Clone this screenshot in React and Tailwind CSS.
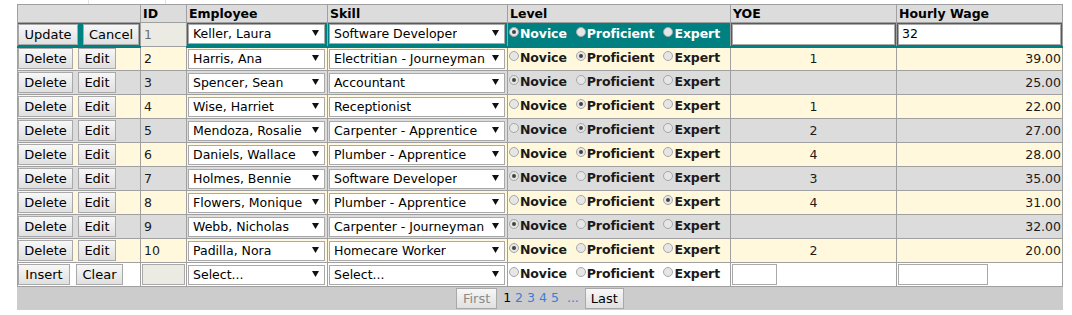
import { useState } from "react";

const rows = [
  { id: 1, emp: "Keller, Laura", skill: "Software Developer", level: 0, yoe: "", wage: "32" },
  { id: 2, emp: "Harris, Ana", skill: "Electritian - Journeyman", level: 1, yoe: "1", wage: "39.00" },
  { id: 3, emp: "Spencer, Sean", skill: "Accountant", level: 0, yoe: "", wage: "25.00" },
  { id: 4, emp: "Wise, Harriet", skill: "Receptionist", level: 1, yoe: "1", wage: "22.00" },
  { id: 5, emp: "Mendoza, Rosalie", skill: "Carpenter - Apprentice", level: 1, yoe: "2", wage: "27.00" },
  { id: 6, emp: "Daniels, Wallace", skill: "Plumber - Apprentice", level: 1, yoe: "4", wage: "28.00" },
  { id: 7, emp: "Holmes, Bennie", skill: "Software Developer", level: 0, yoe: "3", wage: "35.00" },
  { id: 8, emp: "Flowers, Monique", skill: "Plumber - Apprentice", level: 2, yoe: "4", wage: "31.00" },
  { id: 9, emp: "Webb, Nicholas", skill: "Carpenter - Journeyman", level: 0, yoe: "", wage: "32.00" },
  { id: 10, emp: "Padilla, Nora", skill: "Homecare Worker", level: 0, yoe: "2", wage: "20.00" },
];

const levels = ["Novice", "Proficient", "Expert"];

function Btn({ children, w, disabled }) {
  return (
    <button
      className={
        "h-[21px] border border-[#a9a9a9] bg-linear-to-b from-[#f7f7f7] to-[#e0e0e0] text-[13px] leading-none " +
        w +
        (disabled ? " text-[#8a8a8a]" : " text-black")
      }
    >
      {children}
    </button>
  );
}

function FakeSelect({ value, w }) {
  return (
    <div
      className={
        "h-[20px] flex items-center justify-between border border-[#a9a9a9] bg-white pl-[4px] pr-[5px] text-black " +
        w
      }
    >
      <span className="whitespace-nowrap overflow-hidden pt-[1px]">{value}</span>
      <svg width="7" height="7" viewBox="0 0 7 7" className="shrink-0 -mt-[3px]">
        <polygon points="0,1 7,1 3.5,7" fill="#111" />
      </svg>
    </div>
  );
}

function Radio({ checked }) {
  return (
    <span className="w-[10px] h-[10px] rounded-full border border-[#a8a8a8] bg-[#e6e6e6] flex items-center justify-center shrink-0 -mt-[5px]">
      {checked && <span className="w-[4px] h-[4px] rounded-full bg-[#444]" />}
    </span>
  );
}

function Level({ value, light }) {
  return (
    <div className="flex items-center pl-[1px]">
      {levels.map((l, i) => (
        <label
          key={l}
          className={
            "flex items-center gap-[1px] font-bold text-[12.5px] tracking-[-0.1px] " +
            (i < 2 ? "mr-[9px]" : "") +
            (light ? " text-white" : " text-[#1a1a1a]")
          }
        >
          <Radio checked={value === i} />
          {l}
        </label>
      ))}
    </div>
  );
}

export default function App() {
  const [editing] = useState(1);
  const cell = "border border-[#a0a0a0] p-0 h-[24px] align-middle";

  return (
    <div className="w-[1072px] h-[315px] bg-white font-['Verdana','DejaVu_Sans',sans-serif] text-[12.5px] text-[#1a1a1a]">
      <div className="h-[4px] flex">
        <div className="ml-[88px] w-[78px] border-x border-[#e2e2e2]" />
      </div>
      <table className="ml-[17px] border-collapse table-fixed w-[1046px]">
        <colgroup>
          <col className="w-[123px]" />
          <col className="w-[46px]" />
          <col className="w-[141px]" />
          <col className="w-[180px]" />
          <col className="w-[223px]" />
          <col className="w-[166px]" />
          <col className="w-[166px]" />
        </colgroup>
        <thead>
          <tr className="bg-[#dcdcdc]">
            {["", "ID", "Employee", "Skill", "Level", "YOE", "Hourly Wage"].map((h, i) => (
              <th key={i} className="border border-[#a0a0a0] h-[18px] p-0 pl-[2px] pt-[2px] text-left font-bold text-black leading-none">
                {h}
              </th>
            ))}
          </tr>
        </thead>
        <tbody>
          {rows.map((r, idx) => {
            if (r.id === editing) {
              return (
                <tr key={r.id} className="bg-[#008080]">
                  <td className={cell + " border-b-[#008080] border-b-2"}>
                    <div className="flex gap-[5px]">
                      <Btn w="w-[60px]">Update</Btn>
                      <Btn w="w-[56px]">Cancel</Btn>
                    </div>
                  </td>
                  <td className={cell + " bg-[#ebebe4]"}>
                    <div className="pl-[3px] pt-[1px] text-[#6d6d6d]">{r.id}</div>
                  </td>
                  <td className={cell + " border-b-[#008080] border-b-2 px-[1px]"}>
                    <FakeSelect value={r.emp} w="w-[137px]" />
                  </td>
                  <td className={cell + " border-b-[#008080] border-b-2 px-[1px]"}>
                    <FakeSelect value={r.skill} w="w-[176px]" />
                  </td>
                  <td className={cell + " border-b-[#008080] border-b-2"}>
                    <Level value={r.level} light />
                  </td>
                  <td className={cell + " border-b-[#008080] border-b-2 px-[1px]"}>
                    <div className="h-[21px] bg-white border border-[#a9a9a9]" />
                  </td>
                  <td className={cell + " border-b-[#008080] border-b-2 px-[1px]"}>
                    <div className="h-[21px] bg-white border border-[#a9a9a9] pl-[3px] pt-[1px] flex items-center text-black">
                      {r.wage}
                    </div>
                  </td>
                </tr>
              );
            }
            const bg = idx % 2 === 1 ? "bg-[#fff8dc]" : "bg-[#dcdcdc]";
            return (
              <tr key={r.id} className={bg}>
                <td className={cell}>
                  <div className="flex gap-[5px]">
                    <Btn w="w-[55px]">Delete</Btn>
                    <Btn w="w-[38px]">Edit</Btn>
                  </div>
                </td>
                <td className={cell + " pl-[3px] pt-[1px]"}>{r.id}</td>
                <td className={cell + " px-[1px]"}>
                  <FakeSelect value={r.emp} w="w-[137px]" />
                </td>
                <td className={cell + " px-[1px]"}>
                  <FakeSelect value={r.skill} w="w-[176px]" />
                </td>
                <td className={cell}>
                  <Level value={r.level} />
                </td>
                <td className={cell + " text-center pt-[1px]"}>{r.yoe}</td>
                <td className={cell + " text-right pr-[1px] pt-[1px]"}>{r.wage}</td>
              </tr>
            );
          })}
          <tr className="bg-white">
            <td className={cell}>
              <div className="flex gap-[6px]">
                <Btn w="w-[52px]">Insert</Btn>
                <Btn w="w-[47px]">Clear</Btn>
              </div>
            </td>
            <td className={cell + " px-[1px]"}>
              <div className="h-[21px] w-[43px] bg-[#ebebe4] border border-[#a9a9a9]" />
            </td>
            <td className={cell + " px-[1px]"}>
              <FakeSelect value="Select..." w="w-[137px]" />
            </td>
            <td className={cell + " px-[1px]"}>
              <FakeSelect value="Select..." w="w-[176px]" />
            </td>
            <td className={cell}>
              <Level value={-1} />
            </td>
            <td className={cell + " px-[1px]"}>
              <div className="h-[21px] w-[45px] bg-white border border-[#a9a9a9]" />
            </td>
            <td className={cell + " px-[1px]"}>
              <div className="h-[21px] w-[90px] bg-white border border-[#a9a9a9]" />
            </td>
          </tr>
          <tr className="bg-[#cccccc]">
            <td colSpan={7} className="h-[23px] p-0 border border-[#cccccc]">
              <div className="flex items-center justify-center">
                <Btn w="w-[41px]" disabled>First</Btn>
                <span className="ml-[6px] text-black">1</span>
                <span className="ml-[4px] text-[#3b7dd8]">2</span>
                <span className="ml-[4px] text-[#3b7dd8]">3</span>
                <span className="ml-[4px] text-[#3b7dd8]">4</span>
                <span className="ml-[4px] text-[#3b7dd8]">5</span>
                <span className="ml-[8px] text-[#3b7dd8]">...</span>
                <span className="ml-[6px]">
                  <Btn w="w-[39px]">Last</Btn>
                </span>
              </div>
            </td>
          </tr>
        </tbody>
      </table>
    </div>
  );
}
